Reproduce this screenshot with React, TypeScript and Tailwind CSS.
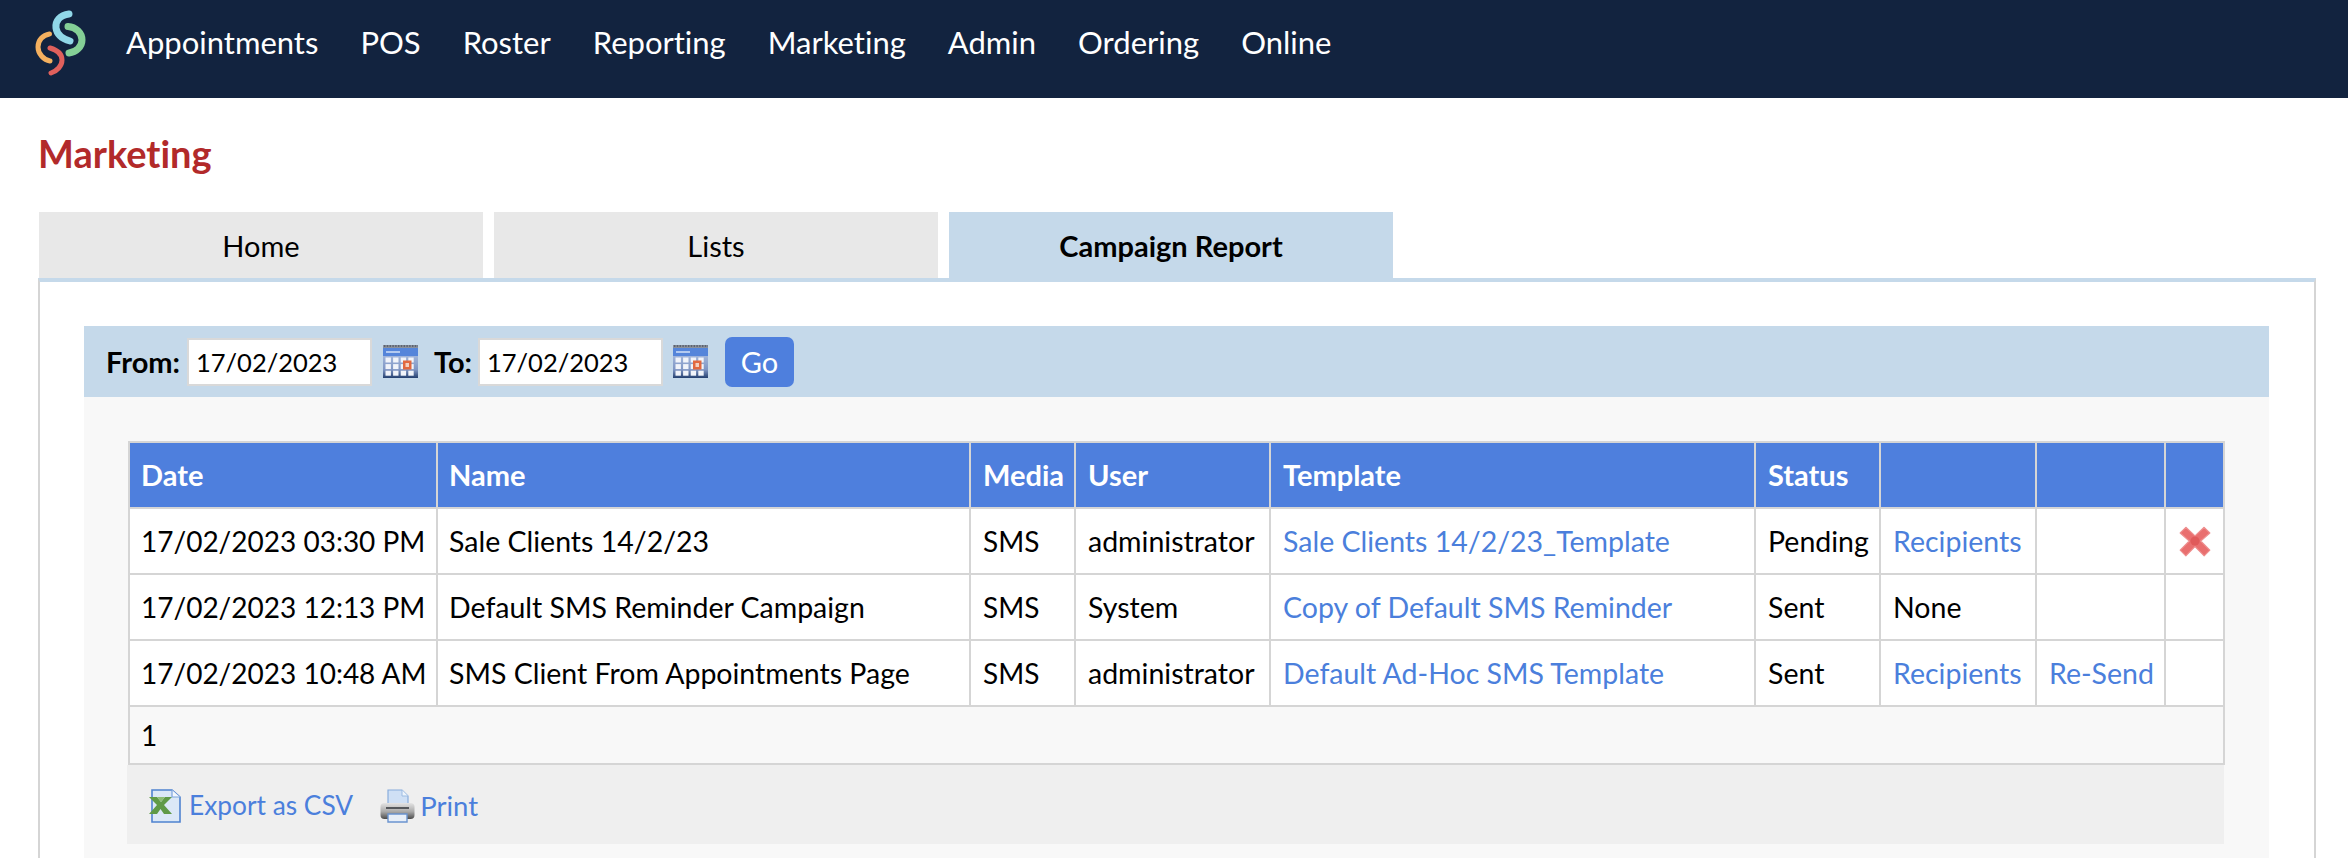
import React from "react";

const Logo = () => (
  <svg width="52" height="70" viewBox="15 8 52 70" fill="none" strokeLinecap="round">
    <path d="M50 14 C41 15 36 21 37 28 C38 35 44 39 51 41" stroke="#90d7e8" strokeWidth="7" />
    <path d="M49 26.5 C57 27 63 33 63 40 C63 47 57 52 50 53" stroke="#84cf96" strokeWidth="7" />
    <path d="M30.5 34 C24 35 19 40 19 47 C19 54 25 60 31 61" stroke="#f4b05f" strokeWidth="5" />
    <path d="M31 48 C38 50 43 54 43 60 C43 66 38 71 32 73" stroke="#e0605c" strokeWidth="5" />
  </svg>
);

const Calendar = () => (
  <svg width="35" height="33" viewBox="0 0 35 33" className="shrink-0">
    <defs>
      <linearGradient id="calbody" x1="0" y1="0" x2="0" y2="1">
        <stop offset="0" stopColor="#b4c6e6" />
        <stop offset="0.72" stopColor="#7f96c4" />
        <stop offset="1" stopColor="#24406f" />
      </linearGradient>
    </defs>
    <rect x="0" y="0" width="35" height="3" fill="#8a909b" />
    <path d="M1 1 H35" stroke="#4d5462" strokeWidth="1.4" strokeDasharray="1.4 1.4" />
    <rect x="0" y="3" width="35" height="30" fill="url(#calbody)" />
    <rect x="0" y="3" width="35" height="8" fill="#5585da" />
    <rect x="3" y="6" width="14" height="2" fill="#b3caf0" />
    {[0, 1, 2, 3].map((c) =>
      [0, 1, 2].map((r) => (
        <rect key={`${c}-${r}`} x={2.5 + c * 7.6} y={12.5 + r * 6.6} width="5.4" height="5" fill="#f1f4fa" />
      ))
    )}
    <rect x="20" y="15.5" width="8.5" height="9" fill="#e2683f" />
    <rect x="22.5" y="18" width="3.5" height="4" fill="#f3cfbf" />
  </svg>
);

const ExcelIcon = () => (
  <svg width="33" height="34" viewBox="0 0 33 34" className="shrink-0">
    <path d="M3 1 H23 L31 8 V33 H3 Z" fill="#dbe8f7" stroke="#4f82d0" strokeWidth="1.6" />
    <path d="M23 1 V8 H31" fill="#f2f7fc" stroke="#7ba3dc" strokeWidth="1.2" />
    <path d="M0 8 H8 L12 13 L16 8 H23 L15 16 L23 25 H15 L11.5 20 L8 25 H0 L8 16 Z" fill="#5f9a47" />
    <path d="M8 8 L12 13 L16 8 Z" fill="#8dbd74" />
  </svg>
);

const PrinterIcon = () => (
  <svg width="35" height="34" viewBox="0 0 35 34" className="shrink-0">
    <defs>
      <linearGradient id="prbody" x1="0" y1="0" x2="0" y2="1">
        <stop offset="0" stopColor="#e4e4e4" />
        <stop offset="0.55" stopColor="#a8a8a8" />
        <stop offset="1" stopColor="#4b4b4b" />
      </linearGradient>
    </defs>
    <path d="M8 1 H22 L28 7 V18 H8 Z" fill="#cfe0f5" stroke="#88acdc" strokeWidth="1.2" />
    <path d="M22 1 V7 H28" fill="#eef5fc" stroke="#9dbce2" strokeWidth="1" />
    <rect x="0.5" y="14" width="34" height="16" rx="4" fill="url(#prbody)" />
    <rect x="6" y="18" width="23" height="2" fill="#55585c" />
    <path d="M8 25 H27 V33 H8 Z" fill="#e7eef8" stroke="#6b94cf" strokeWidth="1.4" />
  </svg>
);

const RedX = () => (
  <svg width="32" height="32" viewBox="0 0 28 28" className="block ml-[1px]">
    <path d="M6 2 L14 9.5 L22 2 L27 7 L19 14 L27 22 L22 27 L14 19 L6 27 L1 22 L9 14 L1 7 Z" fill="#e96f6f" stroke="#ee8f8f" strokeWidth="1" strokeLinejoin="round" />
    <circle cx="14" cy="14" r="4" fill="#e05a5a" />
  </svg>
);

const navItems = ["Appointments", "POS", "Roster", "Reporting", "Marketing", "Admin", "Ordering", "Online"];
const headers = ["Date", "Name", "Media", "User", "Template", "Status", "", "", ""];
const colWidths = [308, 533, 105, 195, 485, 125, 156, 129, 59];

const rows = [
  ["17/02/2023 03:30 PM", "Sale Clients 14/2/23", "SMS", "administrator", "Sale Clients 14/2/23_Template", "Pending", "Recipients", "", "x"],
  ["17/02/2023 12:13 PM", "Default SMS Reminder Campaign", "SMS", "System", "Copy of Default SMS Reminder", "Sent", "None", "", ""],
  ["17/02/2023 10:48 AM", "SMS Client From Appointments Page", "SMS", "administrator", "Default Ad-Hoc SMS Template", "Sent", "Recipients", "Re-Send", ""],
];

const isLink = (col: number, v: string) => col === 4 || (col === 6 && v === "Recipients") || col === 7;

export default function App() {
  return (
    <div className="h-[858px] w-[2348px] overflow-hidden bg-white flex flex-col font-['Lato','Liberation_Sans',sans-serif] [font-variant-ligatures:none] text-[28px] text-black">
      <nav className="h-[98px] shrink-0 bg-[#12233f] flex items-center pl-[34px] pb-[13px]">
        <Logo />
        <ul className="flex gap-[42px] ml-[40px] text-[31px] text-white">
          {navItems.map((n) => (
            <li key={n}>{n}</li>
          ))}
        </ul>
      </nav>

      <div className="flex-1 min-h-0 flex flex-col pl-[38px] pr-[32px]">
        <h1 className="h-[114px] shrink-0 pt-[30px] text-[38px] leading-[50px] font-bold text-[#b22a2a]">Marketing</h1>

        <div className="flex gap-[11px] pl-[1px] shrink-0 text-[29px]">
          <div className="w-[444px] h-[66px] pt-[2px] bg-[#e8e8e8] flex items-center justify-center">Home</div>
          <div className="w-[444px] h-[66px] pt-[2px] bg-[#e8e8e8] flex items-center justify-center">Lists</div>
          <div className="w-[444px] h-[66px] pt-[2px] bg-[#c5d9ea] flex items-center justify-center font-bold">Campaign Report</div>
        </div>

        <div className="flex-1 min-h-0 border-t-[4px] border-t-[#c5d9ea] border-x-2 border-x-[#d5d5d5] px-[44px] pt-[44px]">
          <div className="h-full bg-[#f8f8f8] flex flex-col mr-[1px]">
            <div className="h-[71px] shrink-0 bg-[#c5d9ea] flex items-center pl-[22px] text-[29px]">
              <b className="font-bold w-[81px] whitespace-nowrap">From:</b>
              <input readOnly value="17/02/2023" className="w-[185px] h-[48px] bg-white border-2 border-[#d9d9d9] pl-[7px] outline-none text-[25.5px]" />
              <span className="ml-[11px]"><Calendar /></span>
              <b className="font-bold ml-[16px] w-[44px] whitespace-nowrap">To:</b>
              <input readOnly value="17/02/2023" className="w-[185px] h-[48px] bg-white border-2 border-[#d9d9d9] pl-[7px] outline-none text-[25.5px]" />
              <span className="ml-[10px]"><Calendar /></span>
              <button className="ml-[17px] w-[69px] h-[50px] rounded-[7px] bg-[#4e7fdd] text-white">Go</button>
            </div>

            <div className="pl-[44px] pt-[44px]">
              <table className="table-fixed border-collapse w-[2095px] bg-white">
                <colgroup>
                  {colWidths.map((w, i) => (
                    <col key={i} style={{ width: w }} />
                  ))}
                </colgroup>
                <thead>
                  <tr className="h-[66px] bg-[#4e7fdd] text-white text-[29px]">
                    {headers.map((h, i) => (
                      <th key={i} className={`border-2 border-[#d5d5d5] pr-[8px] text-left font-bold whitespace-nowrap ${i < 2 ? "pl-[11px]" : "pl-[12px]"}`}>{h}</th>
                    ))}
                  </tr>
                </thead>
                <tbody>
                  {rows.map((r, ri) => (
                    <tr key={ri} className="h-[66px]">
                      {r.map((v, ci) => (
                        <td key={ci} className={`border-2 border-[#d5d5d5] pr-[8px] whitespace-nowrap ${ci === 0 || ci === 2 ? "text-[28px]" : "text-[28.5px]"} ${ci < 2 ? "pl-[11px]" : "pl-[12px]"} ${isLink(ci, v) ? "text-[#4b7fdc]" : ""}`}>
                          {v === "x" ? <RedX /> : v}
                        </td>
                      ))}
                    </tr>
                  ))}
                  <tr className="h-[58px] bg-[#f8f8f8]">
                    <td colSpan={9} className="border-2 border-[#d5d5d5] pl-[11px]">1</td>
                  </tr>
                </tbody>
              </table>
              <div className="w-[2097px] -ml-[1px] h-[79px] bg-[#efefef] flex items-center pl-[22px] pt-[3px] text-[26.3px] text-[#4b7fdc]">
                <ExcelIcon />
                <span className="ml-[7px]">Export as CSV</span>
                <span className="ml-[27px]"><PrinterIcon /></span>
                <span className="ml-[5px] text-[27.5px]">Print</span>
              </div>
            </div>
          </div>
        </div>
      </div>
    </div>
  );
}
